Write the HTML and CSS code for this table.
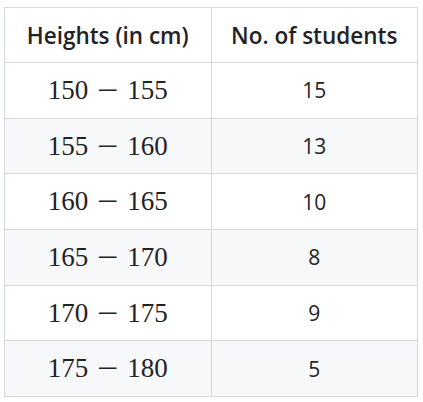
FILE: index.html
```html
<!DOCTYPE html>
<html>
<head>
<meta charset="utf-8">
<link rel="stylesheet" href="styles.css">
</head>
<body>
<table class="data">
  <thead>
    <tr><th>Heights (in cm)</th><th>No. of students</th></tr>
  </thead>
  <tbody>
    <tr><td class="math">150<span class="op">−</span>155</td><td>15</td></tr>
    <tr><td class="math">155<span class="op">−</span>160</td><td>13</td></tr>
    <tr><td class="math">160<span class="op">−</span>165</td><td>10</td></tr>
    <tr><td class="math">165<span class="op">−</span>170</td><td>8</td></tr>
    <tr><td class="math">170<span class="op">−</span>175</td><td>9</td></tr>
    <tr><td class="math">175<span class="op">−</span>180</td><td>5</td></tr>
  </tbody>
</table>
</body>
</html>
```

FILE: styles.css
```css
html, body {
  margin: 0;
  padding: 0;
  background: #ffffff;
}
body {
  padding: 7px 0 0 4px;
  font-family: "Open Sans", "Noto Sans", sans-serif;
  color: #1f2328;
}
.data {
  border-collapse: collapse;
  width: 414px;
}
.data th, .data td {
  border: 1px solid #d1d9e0;
  text-align: center;
  padding: 0;
  height: 54.7px;
}
.data th {
  font-weight: 600;
  font-size: 22.5px;
  height: 54px;
  width: 205px;
}
.data td {
  font-size: 21px;
}
.data td.math {
  font-family: "Liberation Serif", "DejaVu Serif", serif;
  font-size: 27px;
}
.data .op {
  display: inline-block;
  width: 15px;
  margin: 0 12px;
  transform: scaleX(1.4);
}
.data tbody tr:nth-child(even) td {
  background: #f6f8fa;
}
```
